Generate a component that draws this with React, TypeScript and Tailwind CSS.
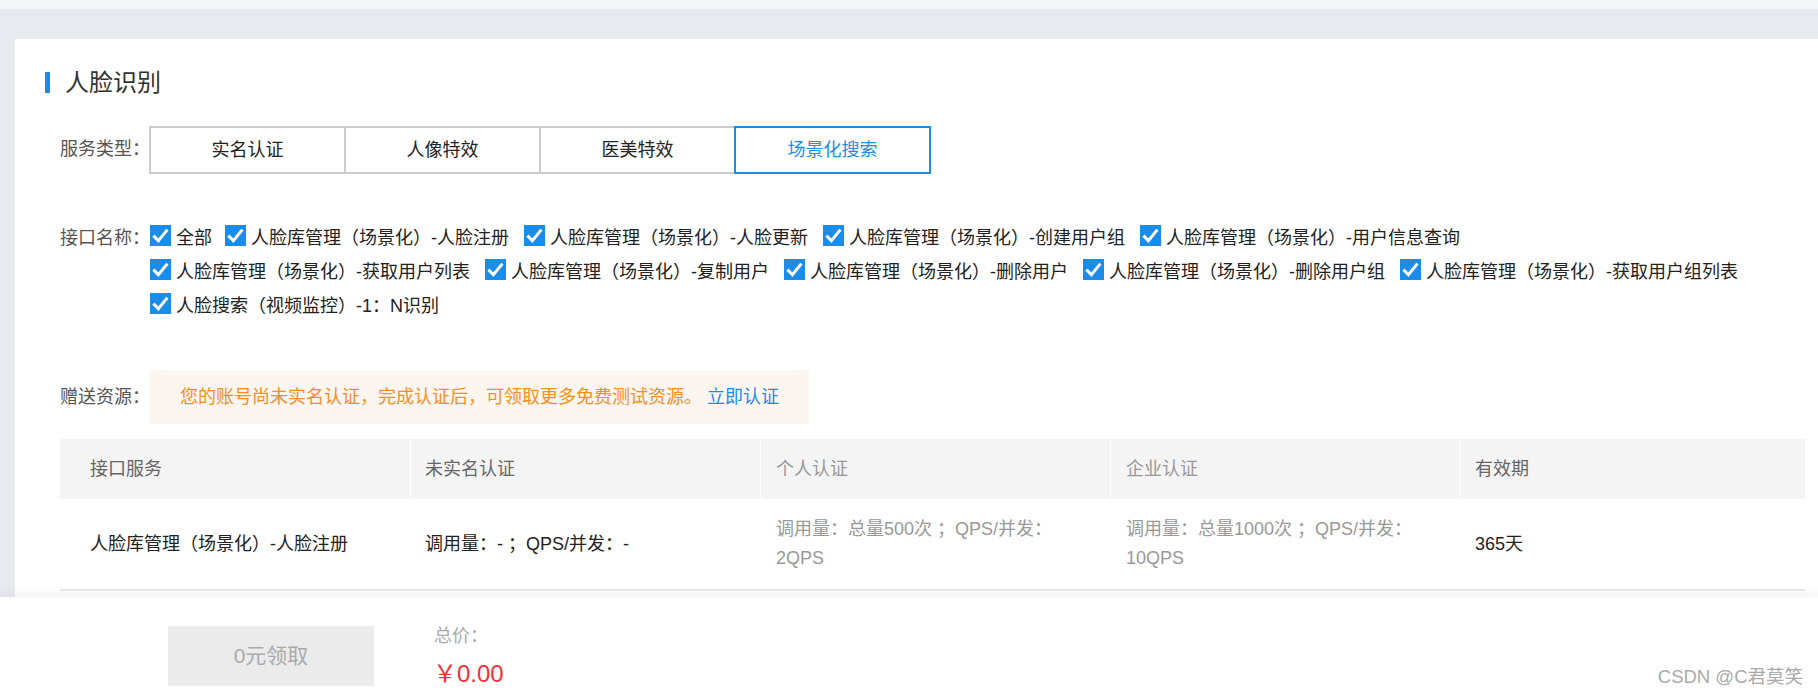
const apiRows = [
  [
    { label: '全部', gap: 'mr-[13px]' },
    { label: '人脸库管理（场景化）-人脸注册', gap: 'mr-[15px]' },
    { label: '人脸库管理（场景化）-人脸更新', gap: 'mr-[15px]' },
    { label: '人脸库管理（场景化）-创建用户组', gap: 'mr-[15px]' },
    { label: '人脸库管理（场景化）-用户信息查询', gap: '' },
  ],
  [
    { label: '人脸库管理（场景化）-获取用户列表', gap: 'mr-[15px]' },
    { label: '人脸库管理（场景化）-复制用户', gap: 'mr-[15px]' },
    { label: '人脸库管理（场景化）-删除用户', gap: 'mr-[15px]' },
    { label: '人脸库管理（场景化）-删除用户组', gap: 'mr-[15px]' },
    { label: '人脸库管理（场景化）-获取用户组列表', gap: '' },
  ],
  [{ label: '人脸搜索（视频监控）-1：N识别', gap: '' }],
];

const tabs = ['实名认证', '人像特效', '医美特效', '场景化搜索'];

function CheckBox() {
  return (
    <span className="mt-[4px] mr-[5px] flex h-[21px] w-[21px] shrink-0 items-center justify-center bg-[#1a8cec]">
      <svg width="21" height="21" viewBox="0 0 21 21" fill="none">
        <path d="M3.4 10.6 L8.4 15.8 L17.4 4.6" stroke="#fff" strokeWidth="3" />
      </svg>
    </span>
  );
}

function TableCell({ children, className }: { children: React.ReactNode; className: string }) {
  return <div className={`flex flex-col justify-center ${className}`}>{children}</div>;
}

export default function App() {
  return (
    <div className="relative flex h-[696px] w-[1818px] flex-col overflow-hidden bg-white text-[18px] [font-family:'Liberation_Sans','Noto_Sans_CJK_SC',sans-serif]">
      <div className="h-[9px] shrink-0 bg-[#f5f6fa]" />

      <main className="h-[588px] shrink-0 bg-[#e8eaef] pt-[30px] pl-[15px]">
        <section className="h-[558px] overflow-hidden bg-white">
          <h1 className="mt-[33px] flex h-[21px] items-center pl-[30px] text-[24px] font-normal text-[#333]">
            <span className="mr-[15px] h-[21px] w-[5px] bg-[#1a8cec]" />
            人脸识别
          </h1>

          <div className="mt-[33px] flex items-center pl-[45px]">
            <span className="w-[89px] shrink-0 pb-[2px] whitespace-nowrap text-[#555]">服务类型：</span>
            <div className="flex">
              {tabs.map((tab, i) => (
                <div
                  key={tab}
                  className={
                    i === 3
                      ? 'relative -ml-[2px] flex h-[48px] w-[197px] items-center justify-center border-2 border-[#1a8cec] text-[#1a8cec]'
                      : i === 0
                        ? 'flex h-[48px] w-[197px] items-center justify-center border-2 border-[#ccc] text-[#222]'
                        : '-ml-[2px] flex h-[48px] w-[197px] items-center justify-center border-2 border-[#ccc] text-[#222]'
                  }
                >
                  {tab}
                </div>
              ))}
            </div>
          </div>

          <div className="mt-[47px] flex pl-[45px]">
            <span className="w-[90px] shrink-0 leading-[34px] text-[#555]">接口名称：</span>
            <div className="flex flex-col">
              {apiRows.map((row, i) => (
                <div key={i} className="flex h-[34px]">
                  {row.map((item) => (
                    <span key={item.label} className={`flex ${item.gap}`}>
                      <CheckBox />
                      <span className="leading-[34px] whitespace-nowrap text-[#222]">{item.label}</span>
                    </span>
                  ))}
                </div>
              ))}
            </div>
          </div>

          <div className="mt-[47px] flex items-center pl-[45px]">
            <span className="w-[90px] shrink-0 text-[#555]">赠送资源：</span>
            <div className="flex h-[54px] w-[659px] items-center bg-[#fdf6f0] pl-[30px]">
              <span className="text-[#f78e1e]">您的账号尚未实名认证，完成认证后，可领取更多免费测试资源。</span>
              <span className="ml-[5px] text-[#1a8cec]">立即认证</span>
            </div>
          </div>

          <div className="mt-[15px] ml-[45px] w-[1745px]">
            <div className="grid h-[60px] grid-cols-[350px_350px_350px_349px_346px] bg-[#f4f4f4]">
              <TableCell className="pl-[30px] text-[#666]">接口服务</TableCell>
              <TableCell className="border-l border-white pl-[14px] text-[#666]">未实名认证</TableCell>
              <TableCell className="border-l border-white pl-[15px] text-[#999]">个人认证</TableCell>
              <TableCell className="border-l border-white pl-[15px] text-[#999]">企业认证</TableCell>
              <TableCell className="border-l border-white pl-[15px] text-[#666]">有效期</TableCell>
            </div>
            <div className="grid h-[92px] grid-cols-[350px_350px_350px_349px_346px] border-b-2 border-[#e8e8e8] leading-[29px]">
              <TableCell className="pl-[30px] text-[#222]">人脸库管理（场景化）-人脸注册</TableCell>
              <TableCell className="pl-[15px] text-[#222]">调用量：- ；QPS/并发：-</TableCell>
              <TableCell className="pl-[16px] text-[#999]">
                <span>调用量：总量500次 ；QPS/并发：</span>
                <span>2QPS</span>
              </TableCell>
              <TableCell className="pl-[16px] text-[#999]">
                <span>调用量：总量1000次 ；QPS/并发：</span>
                <span>10QPS</span>
              </TableCell>
              <TableCell className="pl-[16px] text-[#222]">365天</TableCell>
            </div>
          </div>
        </section>
      </main>

      <footer className="relative flex h-[99px] shrink-0 bg-white pt-[29px] pl-[168px] shadow-[0_-5px_8px_rgba(0,0,0,0.04)]">
        <div className="flex h-[60px] w-[206px] items-center justify-center bg-[#ebebeb] text-[21px] text-[#aaa]">
          0元领取
        </div>
        <div className="ml-[60px] flex flex-col">
          <span className="-mt-[2px] leading-[24px] text-[#aaa]">总价：</span>
          <span className="mt-[13px] -ml-[1px] text-[24px] leading-[26px] text-[#ee3338]">￥0.00</span>
        </div>
        <span className="absolute right-[15px] bottom-[9px] text-[18.5px] leading-[20px] text-[#aaa]">CSDN @C君莫笑</span>
      </footer>
    </div>
  );
}
